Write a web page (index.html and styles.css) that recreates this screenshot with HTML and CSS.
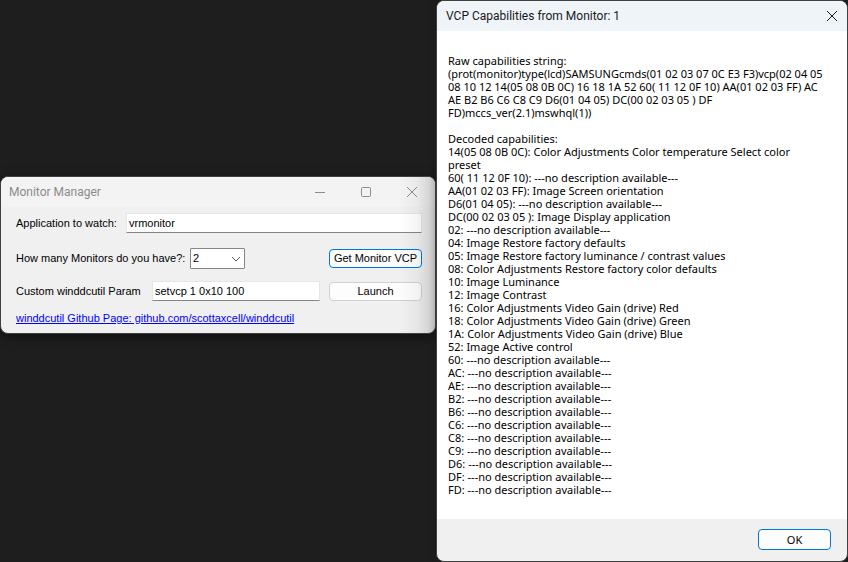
FILE: index.html
```html
<!DOCTYPE html>
<html lang="en">
<head>
<meta charset="utf-8">
<title>Monitor Manager</title>
<link rel="stylesheet" href="styles.css">
</head>
<body>
<main class="desktop">
  <section class="window manager" aria-label="Monitor Manager">
    <header class="titlebar titlebar-inactive">
      <h1 class="title">Monitor Manager</h1>
      <div class="caption-buttons">
        <button class="caption" type="button" aria-label="Minimize"><svg width="12" height="12" viewBox="0 0 12 12"><path d="M1 6.5h10"/></svg></button>
        <button class="caption" type="button" aria-label="Maximize"><svg width="12" height="12" viewBox="0 0 12 12"><rect x="1.5" y="1.5" width="9" height="9" rx="1"/></svg></button>
        <button class="caption" type="button" aria-label="Close"><svg width="12" height="12" viewBox="0 0 12 12"><path d="M1 1l10 10M11 1L1 11"/></svg></button>
      </div>
    </header>
    <form class="form">
      <div class="row">
        <label class="label-app" for="app">Application to watch:</label>
        <input class="field grow" id="app" type="text" value="vrmonitor">
      </div>
      <div class="row">
        <label class="label-count" for="count">How many Monitors do you have?:</label>
        <span class="select-box">
          <select class="select" id="count"><option>1</option><option selected>2</option><option>3</option></select>
          <svg class="chevron" width="10" height="6" viewBox="0 0 10 6"><path d="M1 1l4 4 4-4"/></svg>
        </span>
        <button class="button button-default push" type="button">Get Monitor VCP</button>
      </div>
      <div class="row">
        <label class="label-param" for="param">Custom winddcutil Param</label>
        <input class="field grow" id="param" type="text" value="setvcp 1 0x10 100">
        <button class="button after-field" type="button">Launch</button>
      </div>
      <a class="link" href="https://github.com/scottaxcell/winddcutil">winddcutil Github Page: github.com/scottaxcell/winddcutil</a>
    </form>
  </section>

  <section class="window dialog" aria-label="VCP Capabilities">
    <header class="titlebar titlebar-active">
      <h2 class="title">VCP Capabilities from Monitor: 1</h2>
      <button class="caption caption-close" type="button" aria-label="Close"><svg width="12" height="12" viewBox="0 0 12 12"><path d="M1 1l10 10M11 1L1 11"/></svg></button>
    </header>
    <div class="message">
      <p>Raw capabilities string:
(prot(monitor)type(lcd)SAMSUNGcmds(01 02 03 07 0C E3 F3)vcp(02 04 05
08 10 12 14(05 08 0B 0C) 16 18 1A 52 60( 11 12 0F 10) AA(01 02 03 FF) AC
AE B2 B6 C6 C8 C9 D6(01 04 05) DC(00 02 03 05 ) DF
FD)mccs_ver(2.1)mswhql(1))</p>
      <p>Decoded capabilities:
14(05 08 0B 0C): Color Adjustments Color temperature Select color
preset
60( 11 12 0F 10): ---no description available---
AA(01 02 03 FF): Image Screen orientation
D6(01 04 05): ---no description available---
DC(00 02 03 05 ): Image Display application
02: ---no description available---
04: Image Restore factory defaults
05: Image Restore factory luminance / contrast values
08: Color Adjustments Restore factory color defaults
10: Image Luminance
12: Image Contrast
16: Color Adjustments Video Gain (drive) Red
18: Color Adjustments Video Gain (drive) Green
1A: Color Adjustments Video Gain (drive) Blue
52: Image Active control
60: ---no description available---
AC: ---no description available---
AE: ---no description available---
B2: ---no description available---
B6: ---no description available---
C6: ---no description available---
C8: ---no description available---
C9: ---no description available---
D6: ---no description available---
DF: ---no description available---
FD: ---no description available---</p>
    </div>
    <footer class="dialog-footer">
      <button class="button button-default ok" type="button">OK</button>
    </footer>
  </section>
</main>
</body>
</html>
```
FILE: styles.css
```css
* { box-sizing: border-box; }

body {
  margin: 0;
  background: #1e1e1e;
  color: #000;
  font: 11px/14px "Liberation Sans", Arial, sans-serif;
}

.desktop {
  display: grid;
  grid-template-columns: minmax(0, 436fr) minmax(0, 412fr);
  min-height: 100vh;
}

.window {
  border: 1px solid #404040;
  border-radius: 8px;
  overflow: hidden;
  background: #f0f0f0;
}

.manager {
  position: relative;
  align-self: start;
  margin-top: 176px;
  box-shadow: 0 2px 12px #0008;
}

/* Shade that the front dialog casts on this window */
.manager::after {
  content: "";
  position: absolute;
  inset: 0 0 0 auto;
  width: 36px;
  background: linear-gradient(to right, #0000, #0000000a 50%, #00000028);
  pointer-events: none;
}

.dialog {
  display: flex;
  flex-direction: column;
  box-shadow: 0 0 8px #0004;
  z-index: 1;
}

.titlebar {
  display: flex;
  align-items: center;
  justify-content: space-between;
  height: 30px;
}

.titlebar-inactive { padding-left: 8px; background: #f3f3f3; color: #8b8b8b; }
.titlebar-active { padding-left: 9px; background: #eff4f9; color: #191919; }

.title {
  margin: 0;
  font: 12px/16px Roboto, "Noto Sans", sans-serif;
}

.caption-buttons { display: flex; }

.caption {
  display: grid;
  place-items: center;
  width: 46px;
  height: 28px;
  padding: 0;
  border: 0;
  background: none;
  color: inherit;
}

.caption-close { width: 30px; }

svg { fill: none; stroke: currentColor; }

.form { padding: 6px 13px 8px 15px; }

.row {
  display: flex;
  align-items: center;
  height: 20px;
  margin-bottom: 15px;
}

.row + .row { margin-bottom: 13px; }
.row + .row + .row { margin-bottom: 10px; }

.label-app { width: 110px; }
.label-count { width: 174px; }
.label-param { width: 136px; }

.label-app, .label-count, .label-param { flex: none; white-space: nowrap; }

.field {
  min-width: 0;
  height: 20px;
  padding: 0 2px;
  border: 1px solid #e6e6e6;
  border-bottom-color: #868686;
  background: #fff;
  color: #000;
  font: inherit;
}

.grow { flex: 1; }

.select-box { position: relative; display: flex; }

.select {
  appearance: none;
  width: 55px;
  height: 21px;
  padding: 0 2px;
  border: 1px solid #868686;
  border-radius: 1px;
  background: #fff;
  color: #000;
  font: inherit;
}

.chevron {
  position: absolute;
  right: 4px;
  top: 8px;
  color: #5a5a5a;
  pointer-events: none;
}

.button {
  width: 93px;
  height: 19px;
  padding: 0;
  border: 1px solid #d0d0d0;
  border-radius: 4px;
  background: #fdfdfd;
  color: #000;
  font: inherit;
  white-space: nowrap;
}

.button-default { border-color: #0078d4; }
.push { margin-left: auto; }
.after-field { margin-left: 9px; }

.link {
  display: block;
  color: #00f;
  white-space: nowrap;
}

.message {
  flex: 1;
  padding: 23px 16px 22px 11px;
  background: #fff;
  font: 11px/13px "Noto Sans", sans-serif;
}

.message p { margin: 0; white-space: pre-line; }
.message p + p { margin-top: 13px; }

.dialog-footer {
  display: flex;
  justify-content: flex-end;
  padding: 10px 16px 11px;
}

.ok {
  width: 73px;
  height: 21px;
  font: 11px/13px "Noto Sans", sans-serif;
}
```
